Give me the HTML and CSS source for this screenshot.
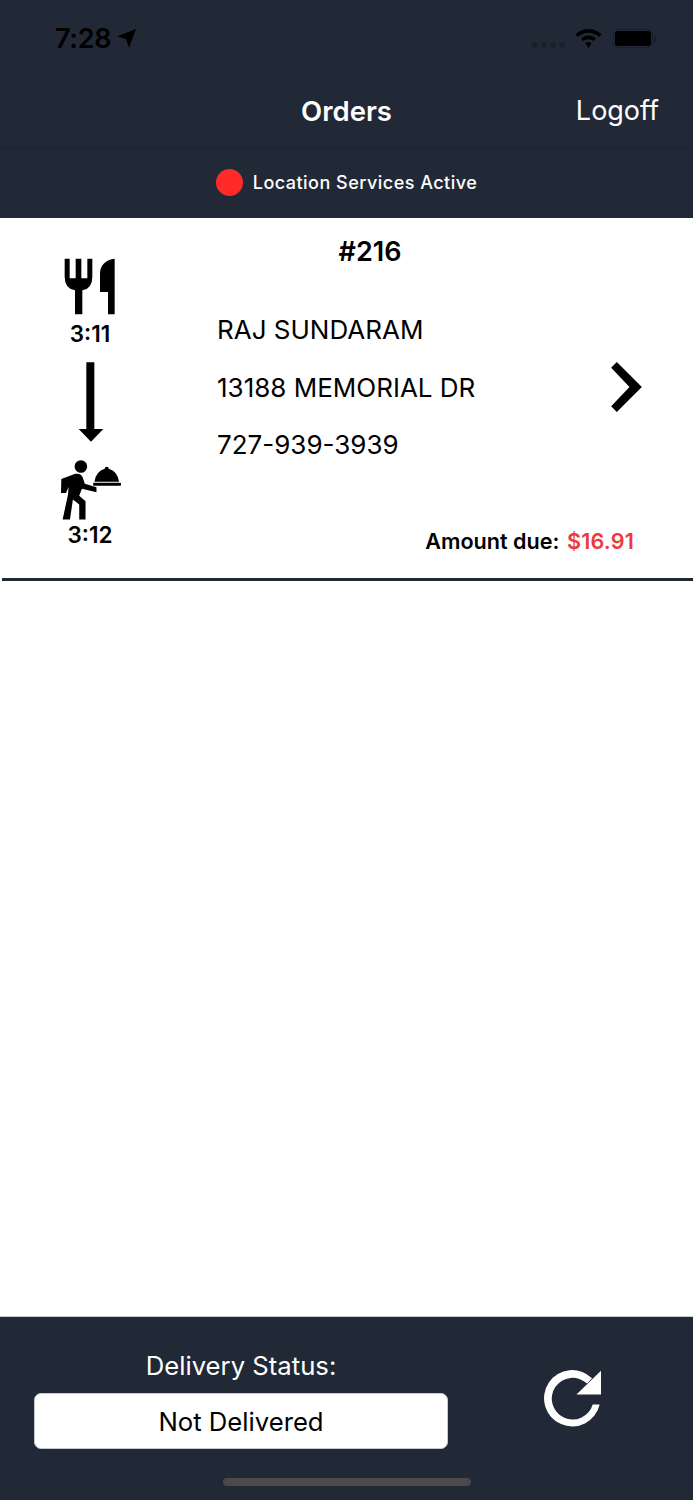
FILE: index.html
```html
<!DOCTYPE html>
<html lang="en">
<head>
  <meta charset="UTF-8">
  <meta name="viewport" content="width=device-width, initial-scale=1.0">
  <title>Orders</title>
  <link rel="stylesheet" href="styles.css">
</head>
<body>
  <div class="app">
    <div class="header">
      <div class="status-bar">
        <div class="clock">
          <span>7:28</span>
          <svg class="loc-arrow" viewBox="0 0 19 19"><path d="M19 0 L12 19 L9 10 L0 7.500 Z"/></svg>
        </div>
        <div class="status-icons">
          <div class="signal"><i></i><i></i><i></i><i></i></div>
          <svg class="wifi" viewBox="0 0 26 19"><path d="M13 0 C18 0 22.500 2 26 5.300 L23.600 8 C20.800 5.300 17 3.700 13 3.700 C9 3.700 5.200 5.300 2.400 8 L0 5.300 C3.500 2 8 0 13 0 Z M13 6.500 C15.800 6.500 18.400 7.600 20.400 9.400 L18 12.100 C16.600 10.900 14.900 10.200 13 10.200 C11.100 10.200 9.400 10.900 8 12.100 L5.600 9.400 C7.600 7.600 10.200 6.500 13 6.500 Z M13 13 C14.200 13 15.300 13.400 16.100 14.200 L13 19 L9.900 14.200 C10.700 13.400 11.800 13 13 13 Z"/></svg>
          <div class="battery"><div class="battery-fill"></div></div>
        </div>
      </div>
      <div class="nav">
        <span class="nav-title">Orders</span>
        <span class="nav-action">Logoff</span>
      </div>
      <div class="location">
        <span class="location-dot"></span>
        <span>Location Services Active</span>
      </div>
    </div>

    <div class="order">
      <div class="times">
        <svg class="icon-food" viewBox="75 53 156 171"><path d="M77 55 H92 V114 H110 V55 H127 V114 H145 V55 H160 V110 Q160 145 130 150 V222 H108 V150 Q77 145 77 110 Z"/><path d="M227 55 V222 H207 V155 H183 V100 C183 75 200 58 227 55 Z"/></svg>
        <div class="time">3:11</div>
        <svg class="icon-arrow" viewBox="112 22 78 238"><path d="M137 22 H161 V222 H188 L151 260 L114 222 H137 Z"/></svg>
        <svg class="icon-waiter" viewBox="62 311 184 180"><circle cx="125" cy="330" r="19"/><path d="M66 368 L108 352 Q125 350 130 362 L137 382 L172 393 V408 L128 397 L120 418 L139 435 V490 H120 V445 L101 430 L92 490 H70 L86 415 L88 392 L80 410 H65 Z"/><path d="M203 331 Q209 331 209 337 Q236 345 240 376 H166 Q170 345 197 337 Q197 331 203 331 Z"/><rect x="162" y="379" width="84" height="9" rx="2"/></svg>
        <div class="time">3:12</div>
      </div>
      <div class="details">
        <div class="order-number">#216</div>
        <div class="detail-row">RAJ SUNDARAM</div>
        <div class="detail-row">13188 MEMORIAL DR</div>
        <div class="detail-row">727-939-3939</div>
        <div class="amount">Amount due: <span class="amount-value">$16.91</span></div>
      </div>
      <svg class="chevron" viewBox="635 65 92 150"><path d="M652 65 L727 140 L652 215 L635 198 L690 140 L635 82 Z"/></svg>
    </div>

    <div class="spacer"></div>

    <div class="footer">
      <div class="footer-row">
        <div class="delivery">
          <div class="delivery-label">Delivery Status:</div>
          <button class="delivery-btn">Not Delivered</button>
        </div>
        <svg class="refresh" viewBox="40 32 172 170"><path d="M208 135 A85 85 0 1 1 185 56 L170 72 A63 63 0 1 0 187 135 Z"/><path d="M212 33 V105 H138 Z"/></svg>
      </div>
      <div class="home-bar"></div>
    </div>
  </div>
</body>
</html>
```

FILE: styles.css
```css
body {
  font-family: Inter, "Liberation Sans", sans-serif;
  margin: 0;
  padding: 0;
  background-color: #fff;
  color: #000;
}
.app {
  display: flex;
  flex-direction: column;
  height: 1500px;
}
.header {
  background-color: #212936;
  height: 218px;
  flex-shrink: 0;
}
.status-bar {
  height: 76px;
  display: flex;
  justify-content: space-between;
  align-items: center;
  padding: 0 40px 0 55px;
}
.clock {
  display: flex;
  align-items: center;
  gap: 6px;
  font-size: 27px;
  font-weight: 600;
  letter-spacing: -0.3px;
  color: #000;
}
.loc-arrow {
  width: 19px;
  height: 19px;
}
.status-icons {
  display: flex;
  align-items: center;
}
.signal {
  display: flex;
  gap: 3px;
  margin-right: 10px;
  margin-top: 14px;
}
.signal i {
  width: 6px;
  height: 6px;
  border-radius: 50%;
  background-color: #1a202b;
}
.wifi {
  width: 27px;
  height: 19px;
  margin-right: 11px;
}
.battery {
  position: relative;
  width: 40px;
  height: 19px;
  border: 1px solid #1a202b;
  border-radius: 6px;
  padding: 1px;
  box-sizing: border-box;
}
.battery::after {
  content: "";
  position: absolute;
  right: -4px;
  top: 5px;
  width: 2px;
  height: 7px;
  background-color: #1a202b;
}
.battery-fill {
  height: 100%;
  background-color: #000;
  border-radius: 3px;
}
.nav {
  position: relative;
  height: 72px;
  display: flex;
  justify-content: center;
  align-items: center;
  padding-bottom: 2px;
  border-bottom: 1px solid #1c232e;
  box-sizing: border-box;
  color: #fff;
  font-size: 27px;
}
.nav-title {
  font-size: 27.500px;
  font-weight: 600;
}
.nav-action {
  position: absolute;
  right: 34px;
}
.location {
  height: 68px;
  display: flex;
  justify-content: center;
  align-items: center;
  gap: 10px;
  color: #fff;
  font-size: 18px;
  font-weight: 500;
  letter-spacing: 0.48px;
}
.location-dot {
  width: 27px;
  height: 27px;
  border-radius: 50%;
  background-color: #ff2a2a;
}
.order {
  position: relative;
  display: flex;
  height: 363px;
  margin-left: 2px;
  border-bottom: 3px solid #212936;
  box-sizing: border-box;
  flex-shrink: 0;
}
.times {
  width: 176px;
  display: flex;
  flex-direction: column;
  align-items: center;
  padding-top: 40px;
  box-sizing: border-box;
}
.time {
  font-size: 22.500px;
  font-weight: 600;
  line-height: 26px;
}
.icon-food {
  width: 52px;
  height: 57px;
  margin-bottom: 6px;
}
.icon-arrow {
  width: 26px;
  height: 80px;
  margin: 15px 0 18px 2px;
}
.icon-waiter {
  width: 61px;
  height: 60px;
  margin-bottom: 2px;
}
.details {
  flex: 1;
  padding-left: 39px;
}
.order-number {
  font-size: 27px;
  font-weight: 600;
  text-align: center;
  width: 306px;
  padding-top: 18px;
  line-height: 32px;
  margin-bottom: 47px;
}
.detail-row {
  font-size: 26px;
  line-height: 30px;
  margin-bottom: 27.500px;
}
.amount {
  position: absolute;
  right: 59px;
  bottom: 24px;
  font-size: 21.600px;
  font-weight: 600;
}
.amount-value {
  color: #ee3a3a;
  letter-spacing: 0.2px;
  margin-left: 2px;
}
.chevron {
  position: absolute;
  left: 609px;
  top: 144px;
  width: 31px;
  height: 50px;
}
.spacer {
  flex: 1;
}
.footer {
  background-color: #212936;
  border-top: 1px solid #c8cbd0;
  height: 184px;
  box-sizing: border-box;
  flex-shrink: 0;
  display: flex;
  flex-direction: column;
}
.footer-row {
  display: flex;
  height: 161px;
  box-sizing: border-box;
  padding: 33px 0 0 34px;
}
.delivery {
  width: 414px;
  color: #fff;
  text-align: center;
}
.delivery-label {
  font-size: 25.700px;
  line-height: 30px;
  padding-top: 1px;
  margin-bottom: 12px;
}
.delivery-btn {
  display: block;
  width: 100%;
  height: 56px;
  background-color: #fff;
  border: 1px solid #c8cbd0;
  border-radius: 7px;
  color: #000;
  font-family: inherit;
  font-size: 25.700px;
}
.refresh {
  width: 57px;
  height: 57px;
  margin-left: 96px;
  margin-top: 20px;
  fill: #fff;
}
.home-bar {
  width: 248px;
  height: 8px;
  border-radius: 4px;
  background-color: #4a4a4a;
  align-self: center;
}
```
